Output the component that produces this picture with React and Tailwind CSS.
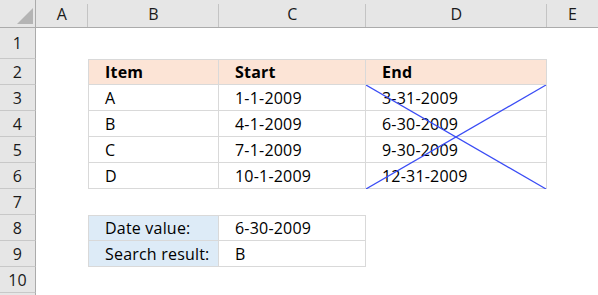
const cols = ["A", "B", "C", "D", "E"];
const rowNumbers = [1, 2, 3, 4, 5, 6, 7, 8, 9, 10];

const ranges = [
  { item: "A", start: "1-1-2009", end: "3-31-2009" },
  { item: "B", start: "4-1-2009", end: "6-30-2009" },
  { item: "C", start: "7-1-2009", end: "9-30-2009" },
  { item: "D", start: "10-1-2009", end: "12-31-2009" },
];

// grid rows for table body B3:D6
const bodyRows = ["row-start-4", "row-start-5", "row-start-6", "row-start-7"];

const cell = "flex items-center pl-4 border-r border-b border-[#d9d9d9]";
const head = "bg-[#e6e6e6] text-[#1a1a1a]";

function Corner() {
  return (
    <div className={`${head} border-r border-b border-[#ababab]`}>
      <svg width="36" height="28" viewBox="0 0 36 28">
        <polygon points="33,8 33,24 17,24" fill="#b4b4b4" />
      </svg>
    </div>
  );
}

export default function App() {
  return (
    <div className="h-[295px] w-[598px] overflow-hidden bg-white font-['Open_Sans','Noto_Sans',sans-serif] text-[16px] tracking-[0.2px] text-black">
      <div className="grid grid-cols-[36px_52px_131px_147px_181px_51px] grid-rows-[28px_31px_repeat(9,26px)_10px]">
        <Corner />
        {cols.map((c, i) => (
          <div
            key={c}
            className={`relative flex items-center justify-center border-b border-[#ababab] ${head} ${
              i < cols.length - 1
                ? "after:absolute after:right-0 after:top-1 after:bottom-0 after:w-px after:bg-[#c4c4c4]"
                : ""
            }`}
          >
            {c}
          </div>
        ))}

        {rowNumbers.map((n) => (
          <div
            key={n}
            className={`col-start-1 flex items-center justify-center border-r border-b border-r-[#ababab] border-b-[#c8c8c8] ${head}`}
          >
            {n}
          </div>
        ))}
        <div className={`col-start-1 border-r border-[#ababab] ${head}`} />

        {/* row 2: header */}
        <div className={`${cell} col-start-3 row-start-3 border-l border-t bg-[#fce4d6] font-bold`}>Item</div>
        <div className={`${cell} col-start-4 row-start-3 border-t bg-[#fce4d6] font-bold`}>Start</div>
        <div className={`${cell} col-start-5 row-start-3 border-t bg-[#fce4d6] font-bold`}>End</div>

        {ranges.map((row, i) => (
          <div key={row.item} className="contents">
            <div className={`${cell} col-start-3 border-l ${bodyRows[i]}`}>{row.item}</div>
            <div className={`${cell} col-start-4 ${bodyRows[i]}`}>{row.start}</div>
            <div className={`${cell} col-start-5 ${bodyRows[i]}`}>{row.end}</div>
          </div>
        ))}

        {/* cross over D3:D6 */}
        <div className="pointer-events-none relative col-start-5 row-start-4 row-end-8">
          <svg className="absolute inset-0 h-full w-full" viewBox="0 0 181 104" preserveAspectRatio="none">
            <line x1="0" y1="0" x2="180" y2="104" stroke="#3a4cf5" strokeWidth="1.2" />
            <line x1="0" y1="104" x2="180" y2="0" stroke="#3a4cf5" strokeWidth="1.2" />
          </svg>
        </div>

        {/* rows 8-9: lookup */}
        <div className={`${cell} col-start-3 row-start-9 border-l border-t bg-[#ddebf7]`}>Date value:</div>
        <div className={`${cell} col-start-4 row-start-9 border-t`}>6-30-2009</div>
        <div className={`${cell} col-start-3 row-start-10 border-l bg-[#ddebf7]`}>Search result:</div>
        <div className={`${cell} col-start-4 row-start-10`}>B</div>
      </div>
    </div>
  );
}
